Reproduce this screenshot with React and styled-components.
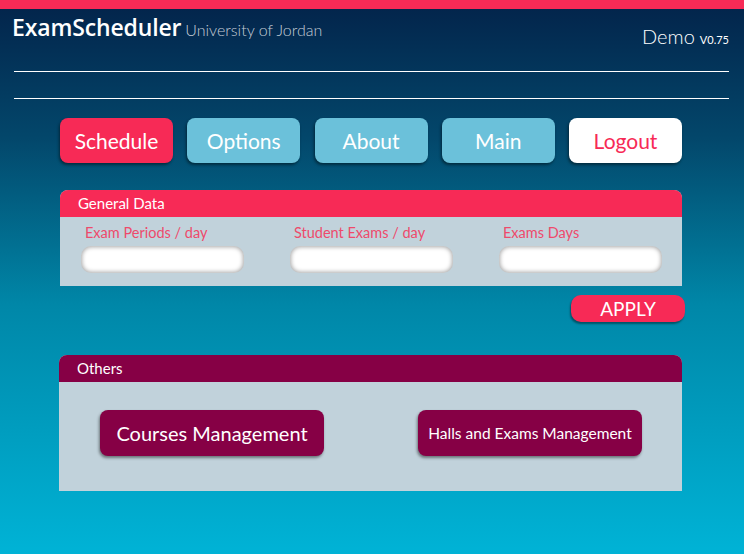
import styled, { createGlobalStyle } from "styled-components";

const GlobalStyle = createGlobalStyle`
	html, body {
		margin: 0;
		padding: 0;
	}
	body {
		font-family: Lato, "Open Sans", sans-serif;
		background: linear-gradient(180deg, #03234a 0%, #03476b 25%, #0087a8 55%, #00b3d6 100%);
		min-height: 554px;
	}
`;

const Page = styled.div`
	height: 554px;
	overflow: hidden;
	border-top: 9px solid #f72a56;
	box-sizing: border-box;
`;

const Header = styled.header`
	display: flex;
	justify-content: space-between;
	align-items: flex-end;
	padding: 8px 15px 0 12px;
	height: 34px;
	box-sizing: border-box;
`;

const Brand = styled.div`
	display: flex;
	align-items: baseline;
	gap: 4px;
`;

const Logo = styled.span`
	font-family: "Open Sans", sans-serif;
	font-weight: 600;
	font-size: 23px;
	letter-spacing: -0.15px;
	color: #fff;
`;

const University = styled.span`
	font-size: 16px;
	font-weight: 300;
	color: #c3ccd6;
`;

const Version = styled.div`
	color: #fff;
	font-size: 20px;
	font-weight: 300;
	align-self: flex-end;
	margin-bottom: -5px;
	small {
		font-size: 11px;
		font-weight: 400;
		margin-left: 5px;
	}
`;

const Rule = styled.hr`
	border: none;
	border-top: 1px solid #fff;
	margin: ${(p) => p.$top}px 15px 0 14px;
`;

const Main = styled.main`
	width: 622px;
	margin: 19px 0 0 60px;
`;

const Nav = styled.nav`
	display: grid;
	grid-template-columns: repeat(5, 113px);
	justify-content: space-between;
`;

const NavButton = styled.button`
	height: 45px;
	border: none;
	border-radius: 8px;
	font-family: Lato, sans-serif;
	font-size: 21px;
	font-weight: 400;
	background: ${(p) => (p.$variant === "active" ? "#f72a56" : p.$variant === "light" ? "#fff" : "#6bc1da")};
	color: ${(p) => (p.$variant === "light" ? "#f72a56" : "#fff")};
	box-shadow: -1px 2px 3px rgba(0, 0, 0, 0.45);
	padding: 0;
`;

const Panel = styled.section`
	margin-top: ${(p) => p.$top}px;
	margin-left: ${(p) => p.$shift || 0}px;
	background: #c1d2db;
	border-radius: 8px 8px 0 0;
	overflow: hidden;
`;

const PanelTitle = styled.div`
	height: 27px;
	line-height: 27px;
	padding-left: 18px;
	font-size: 15px;
	font-weight: 400;
	color: #fff;
	background: ${(p) => p.$color};
`;

const Fields = styled.div`
	display: grid;
	grid-template-columns: repeat(3, 163px);
	column-gap: 46px;
	padding: 7px 0 13px 21px;
`;

const Field = styled.label`
	display: flex;
	flex-direction: column;
	gap: 5px;
	font-size: 14.5px;
	font-weight: 400;
	color: #ee4a6b;
	span {
		padding-left: 4px;
	}
`;

const Input = styled.input`
	height: 25px;
	border: none;
	border-radius: 10px;
	background: #fff;
	box-shadow: inset 0 0 4px 1px rgba(0, 0, 0, 0.35);
	outline: none;
`;

const ApplyRow = styled.div`
	display: flex;
	justify-content: flex-end;
	margin: 9px -3px 0 0;
`;

const ApplyButton = styled.button`
	width: 114px;
	height: 27px;
	border: none;
	border-radius: 10px;
	background: #f72a56;
	color: #fff;
	font-family: Lato, sans-serif;
	font-size: 19px;
	font-weight: 400;
	box-shadow: -1px 2px 2px rgba(0, 0, 0, 0.4);
	padding: 0;
`;

const Actions = styled.div`
	display: flex;
	justify-content: space-between;
	padding: 28px 40px 35px 41px;
`;

const ActionButton = styled.button`
	width: 224px;
	height: 46px;
	border: none;
	border-radius: 8px;
	background: #860045;
	color: #fff;
	font-family: Lato, sans-serif;
	font-size: ${(p) => p.$size}px;
	font-weight: 400;
	box-shadow: -1px 2px 3px rgba(0, 0, 0, 0.45);
	padding: 0;
`;

export default function App() {
	return (
		<Page>
			<GlobalStyle />
			<Header>
				<Brand>
					<Logo>ExamScheduler</Logo>
					<University>University of Jordan</University>
				</Brand>
				<Version>
					Demo<small>V0.75</small>
				</Version>
			</Header>
			<Rule $top={28} />
			<Rule $top={26} />
			<Main>
				<Nav>
					<NavButton $variant="active">Schedule</NavButton>
					<NavButton>Options</NavButton>
					<NavButton>About</NavButton>
					<NavButton>Main</NavButton>
					<NavButton $variant="light">Logout</NavButton>
				</Nav>
				<Panel $top={27}>
					<PanelTitle $color="#f72a56">General Data</PanelTitle>
					<Fields>
						<Field>
							<span>Exam Periods / day</span>
							<Input />
						</Field>
						<Field>
							<span>Student Exams / day</span>
							<Input />
						</Field>
						<Field>
							<span>Exams Days</span>
							<Input />
						</Field>
					</Fields>
				</Panel>
				<ApplyRow>
					<ApplyButton>APPLY</ApplyButton>
				</ApplyRow>
				<Panel $top={33} $shift={-1}>
					<PanelTitle $color="#860045">Others</PanelTitle>
					<Actions>
						<ActionButton $size={20}>Courses Management</ActionButton>
						<ActionButton $size={15.5}>Halls and Exams Management</ActionButton>
					</Actions>
				</Panel>
			</Main>
		</Page>
	);
}
